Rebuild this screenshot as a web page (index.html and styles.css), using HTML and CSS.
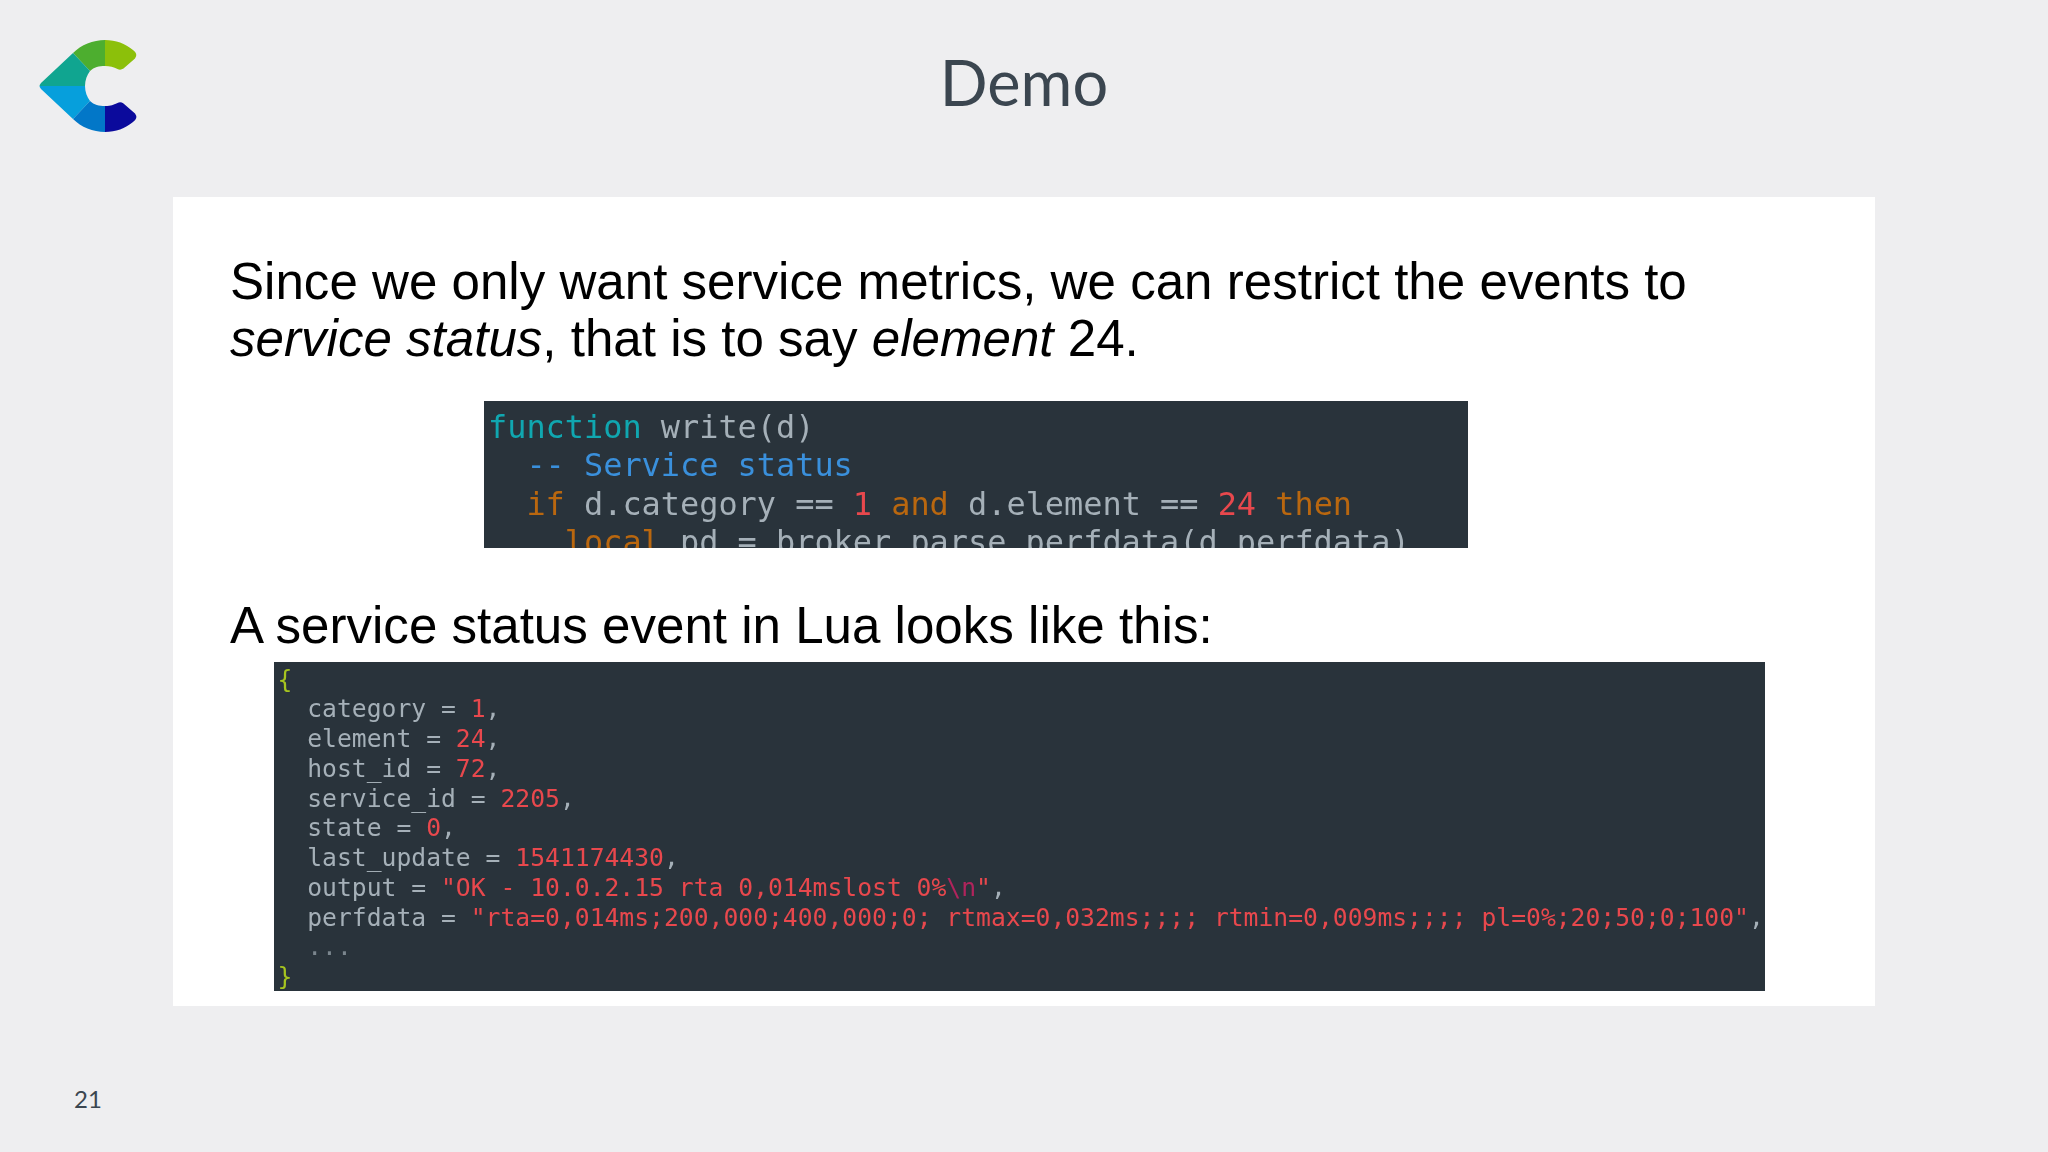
FILE: index.html
```html
<!DOCTYPE html>
<html lang="en">
<head>
<meta charset="utf-8">
<title>Demo</title>
<link rel="stylesheet" href="styles.css">
</head>
<body>
<main class="slide">
  <header class="top">
    <svg class="logo" viewBox="30 30 120 110" aria-label="Logo">
      <path fill="#8cc00a" d="M105 40C116 40 125 43.500 133 50Q138.500 54 135 58.500L123.500 68.500Q120.500 70.500 117.500 69Q112 66 105 66Z"/>
      <path fill="#4dae2f" d="M73 53C81 45 93 40 105 40V66C99 66 94 67 90 71Z"/>
      <path fill="#10a590" d="M41 83L73 53L90 71C87 75 85 80 85 86H39.500Q39.500 85 41 83Z"/>
      <path fill="#069fdc" d="M39.500 86H85C85 92 87 97 90 101L73 119L41 89Q39.500 87 39.500 86Z"/>
      <path fill="#0277c8" d="M73 119L90 101C94 105 99 106 105 106V132C93 132 81 127 73 119Z"/>
      <path fill="#0b0a9c" d="M105 106C112 106 112.500 105 117.500 103Q120.500 101.500 123.500 103.500L135 113.500Q138.500 118 133 122C125 128.500 116 132 105 132Z"/>
    </svg>
    <h1 class="title">Demo</h1>
  </header>
  <section class="card">
    <p class="lead">Since we only want service metrics, we can restrict the events to<br><em>service status</em>, that is to say <em>element</em> 24.</p>
    <pre class="code code-small"><span class="fn">function</span> write(d)
  <span class="cm">-- Service status</span>
  <span class="kw">if</span> d.category == <span class="num">1</span> <span class="kw">and</span> d.element == <span class="num">24</span> <span class="kw">then</span>
    <span class="kw">local</span> pd = broker.parse_perfdata(d.perfdata)</pre>
    <p class="lead lead-second">A service status event in Lua looks like this:</p>
    <pre class="code code-event"><span class="br">{</span>
  category = <span class="num">1</span>,
  element = <span class="num">24</span>,
  host_id = <span class="num">72</span>,
  service_id = <span class="num">2205</span>,
  state = <span class="num">0</span>,
  last_update = <span class="num">1541174430</span>,
  output = <span class="num">"OK - 10.0.2.15 rta 0,014mslost 0%</span><span class="esc">\n</span><span class="num">"</span>,
  perfdata = <span class="num">"rta=0,014ms;200,000;400,000;0; rtmax=0,032ms;;;; rtmin=0,009ms;;;; pl=0%;20;50;0;100"</span>,
  <span class="dim">...</span>
<span class="br">}</span></pre>
  </section>
  <footer class="page-no">21</footer>
</main>
</body>
</html>
```
FILE: styles.css
```css
html, body {
  margin: 0;
  padding: 0;
  background: #eeeef0;
}
.slide {
  width: 2048px;
  height: 1152px;
  overflow: hidden;
  display: flex;
  flex-direction: column;
  font-family: "Liberation Sans", Arial, sans-serif;
}
.top {
  height: 197px;
  display: grid;
  grid-template-columns: 1fr auto 1fr;
  align-items: start;
}
.logo {
  width: 120px;
  height: 110px;
  margin: 30px 0 0 30px;
}
.title {
  margin: 42px 0 0;
  font-family: Lato, "Open Sans", sans-serif;
  font-weight: 400;
  font-size: 63px;
  line-height: 80px;
  color: #3b4650;
}
.card {
  margin-left: 173px;
  width: 1702px;
  height: 809px;
  box-sizing: border-box;
  padding: 56px 0 0 57px;
  background: #fff;
}
.lead {
  margin: 0;
  font-size: 51.1px;
  line-height: 57px;
  color: #000;
}
.lead-second {
  margin-top: 49px;
}
.code {
  margin: 0;
  background: #29333b;
  color: #a5b0b8;
  font-family: "DejaVu Sans Mono", monospace;
  overflow: hidden;
  box-sizing: border-box;
  filter: blur(0.5px);
}
.code-small {
  margin: 34px 0 0 254px;
  width: 983.5px;
  height: 147px;
  padding: 7px 0 0 4px;
  font-size: 31.9px;
  line-height: 38.3px;
}
.code-event {
  margin: 8px 0 0 44px;
  width: 1490.5px;
  height: 329px;
  padding: 2.5px 0 0 3.5px;
  font-size: 24.7px;
  line-height: 29.75px;
}
.fn { color: #10a7b0; }
.cm { color: #3a90dc; }
.kw { color: #b9670f; }
.num { color: #e8484d; }
.esc { color: #b0245c; }
.br { color: #a6c41f; }
.dim { color: #7b868e; }
.page-no {
  margin: 79px 0 0 74px;
  font-family: Lato, "Open Sans", sans-serif;
  font-size: 24px;
  line-height: 28px;
  color: #3b4650;
}
```
